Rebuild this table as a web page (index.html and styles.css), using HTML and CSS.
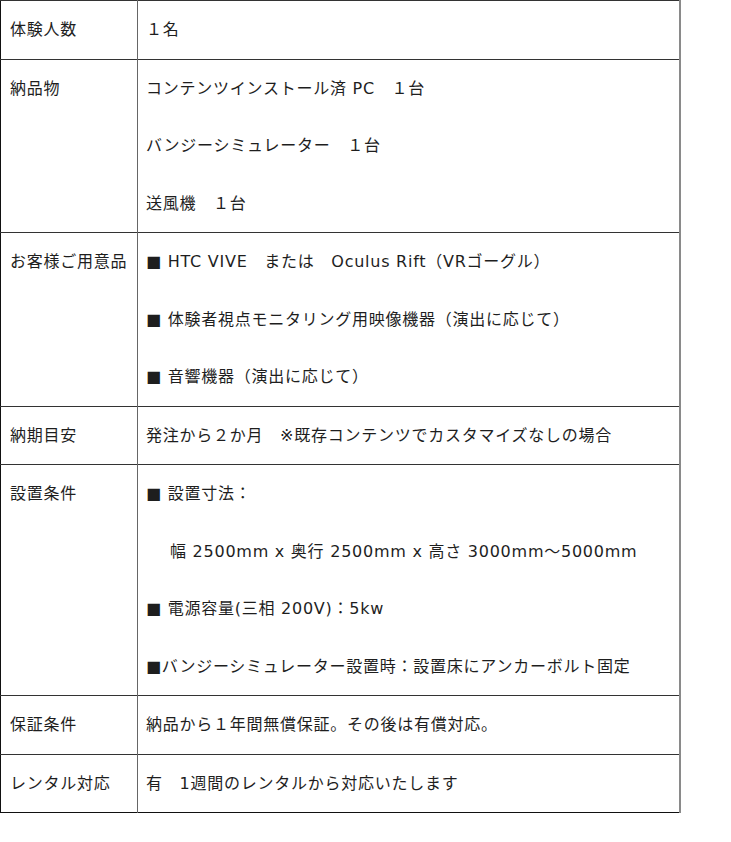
FILE: index.html
```html
<!DOCTYPE html>
<html lang="ja">
<head>
<meta charset="utf-8">
<title>仕様</title>
<link rel="stylesheet" href="styles.css">
</head>
<body>
<table class="spec">
  <tr>
    <th class="label">体験人数</th>
    <td class="value"><p class="line">１名</p></td>
  </tr>
  <tr>
    <th class="label">納品物</th>
    <td class="value">
      <p class="line">コンテンツインストール済 PC　１台</p>
      <p class="line">バンジーシミュレーター　１台</p>
      <p class="line">送風機　１台</p>
    </td>
  </tr>
  <tr>
    <th class="label">お客様ご用意品</th>
    <td class="value">
      <p class="line">■ HTC VIVE　または　Oculus Rift（VRゴーグル）</p>
      <p class="line">■ 体験者視点モニタリング用映像機器（演出に応じて）</p>
      <p class="line">■ 音響機器（演出に応じて）</p>
    </td>
  </tr>
  <tr>
    <th class="label">納期目安</th>
    <td class="value"><p class="line">発注から２か月　※既存コンテンツでカスタマイズなしの場合</p></td>
  </tr>
  <tr>
    <th class="label">設置条件</th>
    <td class="value">
      <p class="line">■ 設置寸法：</p>
      <p class="line indent">幅 2500mm x 奥行 2500mm x 高さ 3000mm～5000mm</p>
      <p class="line">■ 電源容量(三相 200V)：5kw</p>
      <p class="line">■バンジーシミュレーター設置時：設置床にアンカーボルト固定</p>
    </td>
  </tr>
  <tr>
    <th class="label">保証条件</th>
    <td class="value"><p class="line">納品から１年間無償保証。その後は有償対応。</p></td>
  </tr>
  <tr>
    <th class="label">レンタル対応</th>
    <td class="value"><p class="line">有　1週間のレンタルから対応いたします</p></td>
  </tr>
</table>
</body>
</html>
```

FILE: styles.css
```css
html, body {
  margin: 0;
  padding: 0;
  background: #fff;
}

body {
  font-family: "DejaVu Sans", "Noto Sans CJK JP", sans-serif;
  font-size: 16px;
  letter-spacing: 0.75px;
  color: #1e1e1e;
}

.spec {
  border-collapse: collapse;
  width: 681px;
  border-top: 1px solid #888;
  border-left: 1px solid #111;
  border-right: 2px solid #8a8a8a;
  border-bottom: 1px solid #111;
}

.spec tr {
  border-top: 1px solid #333;
}

.label {
  width: 127px;
  padding: 0 0 0 9px;
  text-align: left;
  vertical-align: top;
  font-weight: normal;
  border-right: 1px solid #666;
  white-space: nowrap;
}

.value {
  padding: 0 0 0 8px;
  vertical-align: top;
}

.label,
.line {
  line-height: 57.5px;
}

.line {
  margin: 0;
  white-space: nowrap;
}

.indent {
  padding-left: 24px;
}
```
